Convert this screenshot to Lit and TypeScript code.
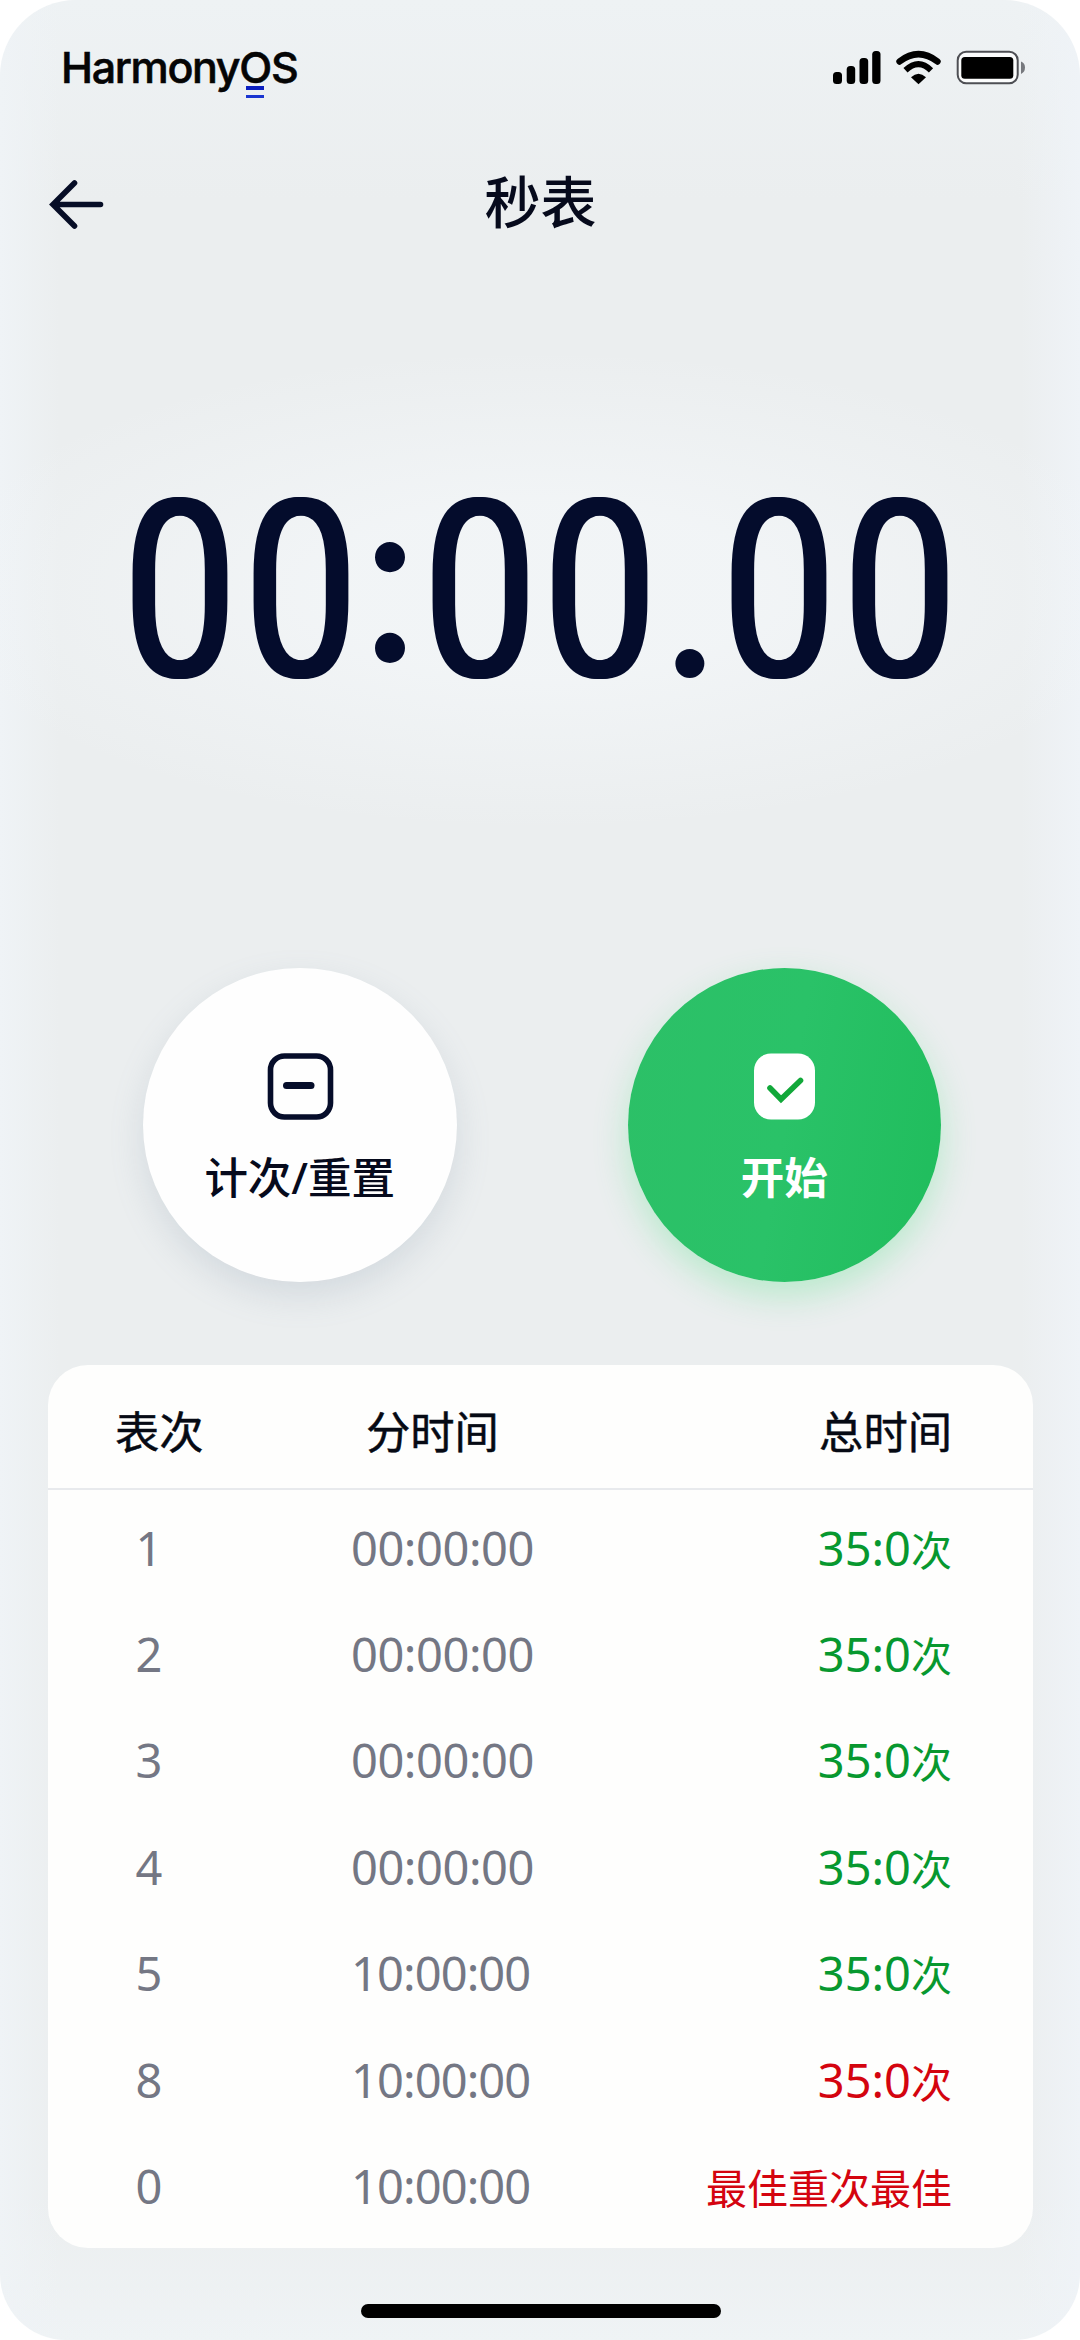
import { LitElement, html, css, svg } from "lit";
import { customElement, property } from "lit/decorators.js";
import { classMap } from "lit/directives/class-map.js";

interface Lap {
  no: string;
  split: string;
  total: string;
  tone: "good" | "bad";
}

const LAPS: Lap[] = [
  { no: "1", split: "00:00:00", total: "35:0次", tone: "good" },
  { no: "2", split: "00:00:00", total: "35:0次", tone: "good" },
  { no: "3", split: "00:00:00", total: "35:0次", tone: "good" },
  { no: "4", split: "00:00:00", total: "35:0次", tone: "good" },
  { no: "5", split: "10:00:00", total: "35:0次", tone: "good" },
  { no: "8", split: "10:00:00", total: "35:0次", tone: "bad" },
  { no: "0", split: "10:00:00", total: "最佳重次最佳", tone: "bad" },
];

@customElement("status-bar")
class StatusBar extends LitElement {
  static styles = css`
    :host {
      display: flex;
      justify-content: space-between;
      align-items: center;
      height: 134px;
      padding: 0 52px 0 61px;
    }
    .brand {
      font: 500 43px/60px Inter, "Noto Sans", sans-serif;
      letter-spacing: -1.35px;
      -webkit-text-stroke: 0.6px #050505;
      color: #050505;
    }
    .o {
      position: relative;
    }
    .marks {
      position: absolute;
      left: 7px;
      top: 45px;
      width: 18px;
      height: 12px;
      box-sizing: border-box;
      border-top: 4px solid #0b1fc0;
      border-bottom: 3.5px solid #1a35d0;
    }
    .icons {
      display: block;
    }
  `;
  render() {
    return html`
      <div class="brand">Harmony<span class="o">O<i class="marks"></i></span>S</div>
      <svg class="icons" width="196" height="40" viewBox="832 47 196 40">
        <g fill="#000">
          <rect x="833" y="72" width="9" height="12" rx="3.5" />
          <rect x="846.7" y="66" width="8.5" height="18" rx="3.5" />
          <rect x="859.5" y="58" width="8.7" height="26" rx="3.5" />
          <rect x="872.2" y="51" width="8.3" height="33" rx="3.5" />
        </g>
        <g fill="none" stroke="#000">
          <path d="M899.5 61.5Q918.5 46.8 937.5 61.5" stroke-width="6.4" stroke-linecap="round" />
          <path d="M905.5 70.3Q918.5 58 931 70.3" stroke-width="6" />
        </g>
        <path d="M911 77.3Q918.5 70 926 77.3L918.5 84.2z" fill="#000" />
        <rect x="957.7" y="51.7" width="60" height="31.6" rx="8.5" fill="#fbfcfc" stroke="#4e4f54" stroke-width="2" />
        <rect x="961.3" y="57" width="52" height="21.8" rx="3.5" fill="#000" />
        <path d="M1021 61.5Q1025 63 1025 67.5T1021 74z" fill="#77797e" />
      </svg>
    `;
  }
}

@customElement("title-bar")
class TitleBar extends LitElement {
  static styles = css`
    :host {
      display: grid;
      grid-template-columns: 1fr auto 1fr;
      align-items: center;
      height: 140px;
      padding: 0 48px 0 49px;
    }
    .back {
      display: block;
    }
    .title {
      font: 500 56px/70px "Noto Sans CJK SC", sans-serif;
      padding-bottom: 10px;
      color: #060a1c;
    }
  `;
  render() {
    return html`
      <svg class="back" width="56" height="50" viewBox="0 0 56 50" fill="none" stroke="#060d26" stroke-width="5.6" stroke-linecap="round">
        <path d="M25.5 4L4 25.5L25.5 47M5 25.5H51.5" />
      </svg>
      <div class="title">秒表</div>
    `;
  }
}

@customElement("time-display")
class TimeDisplay extends LitElement {
  @property() value = "00:00.00";
  static styles = css`
    :host {
      display: flex;
      justify-content: center;
      align-items: center;
      height: 260px;
      color: #040c2c;
    }
    .cell {
      display: flex;
      justify-content: center;
      height: 260px;
      line-height: 260px;
    }
    .digit {
      width: 120.9px;
      font-family: Roboto, sans-serif;
      font-size: 249px;
      font-weight: 400;
    }
    .digit .glyph {
      transform: translateY(1.5px) scaleX(0.81);
      text-shadow: 2.6px 0 0 #040c2c, -2.6px 0 0 #040c2c;
    }
    .mark {
      width: 58px;
      font-family: Lato, sans-serif;
      font-weight: 400;
    }
    .colon {
      font-size: 240px;
      transform: translateY(-22px);
    }
    .point {
      font-size: 232px;
      transform: translateY(-4px);
    }
  `;
  render() {
    return html`${[...this.value].map((c) => {
      const digit = c >= "0" && c <= "9";
      const classes = { cell: true, digit, mark: !digit, colon: c === ":", point: c === "." };
      return html`<span class=${classMap(classes)}><span class="glyph">${c}</span></span>`;
    })}`;
  }
}

@customElement("round-button")
class RoundButton extends LitElement {
  @property() label = "";
  @property({ reflect: true }) kind: "reset" | "start" = "reset";
  static styles = css`
    :host {
      display: flex;
      flex-direction: column;
      align-items: center;
      box-sizing: border-box;
      width: 313.5px;
      height: 314.5px;
      padding-top: 84px;
      border-radius: 50%;
      background: #fefefe;
      color: #060a1c;
      box-shadow: 0 14px 34px rgba(120, 140, 160, 0.2);
      font: 500 43.5px/60px "Noto Sans", "Noto Sans CJK SC", sans-serif;
    }
    :host([kind="start"]) {
      background: linear-gradient(100deg, #2cc067 0%, #2ac268 50%, #1fbd5c 100%);
      color: #fff;
      box-shadow: 0 14px 34px rgba(80, 225, 130, 0.32);
      font-weight: 700;
    }
    .icon {
      display: block;
    }
    .label {
      margin-top: 26px;
      white-space: nowrap;
    }
  `;
  render() {
    const icon =
      this.kind === "reset"
        ? svg`<rect x="4.5" y="4" width="60" height="61" rx="14" fill="none" stroke="#060d2a" stroke-width="5.6"/>
              <path d="M20.5 33.5H45" stroke="#060d2a" stroke-width="7" stroke-linecap="round"/>`
        : svg`<rect x="4" y="1.5" width="61" height="66" rx="17" fill="#fff"/>
              <path d="M20 36L31 47.2L50.5 28.5" fill="none" stroke="#12a83a" stroke-width="5.6" stroke-linecap="round"/>`;
    return html`
      <svg class="icon" width="68" height="69" viewBox="0 0 68 69">${icon}</svg>
      <div class="label">${this.label}</div>
    `;
  }
}

@customElement("lap-table")
class LapTable extends LitElement {
  @property({ attribute: false }) laps: Lap[] = [];
  static styles = css`
    :host {
      display: block;
      box-sizing: border-box;
      height: 883.5px;
      margin: 0 47px 0 48px;
      border-radius: 40px;
      background: #fefefd;
    }
    .row {
      display: grid;
      grid-template-columns: 202px 1fr 1fr;
      align-items: center;
      height: 106.4px;
      padding-right: 81px;
    }
    .head {
      height: 125px;
      padding-top: 8px;
      box-sizing: border-box;
      border-bottom: 2px solid #e8eaed;
      margin-bottom: 5px;
      font: 400 44.3px/60px "Noto Sans CJK SC", sans-serif;
      -webkit-text-stroke: 0.5px #060a14;
      color: #060a14;
    }
    .no,
    .split {
      font: 400 47px/60px "Noto Sans", sans-serif;
      color: #747784;
    }
    .no {
      text-align: center;
    }
    .split {
      padding-left: 101px;
      letter-spacing: -0.45px;
    }
    .tight {
      letter-spacing: -0.9px;
    }
    .total {
      text-align: right;
      font: 400 41px/60px "Noto Sans CJK SC", sans-serif;
      white-space: nowrap;
    }
    .num {
      font: 400 47px/60px "Noto Sans", sans-serif;
    }
    .good {
      color: #07982f;
    }
    .bad {
      color: #d4040f;
    }
    .h1 {
      padding-left: 67px;
    }
    .h2 {
      padding-left: 116px;
    }
    .h3 {
      text-align: right;
    }
  `;
  render() {
    return html`
      <div class="row head">
        <span class="h1">表次</span><span class="h2">分时间</span><span class="h3">总时间</span>
      </div>
      ${this.laps.map((l) => {
        const [, num, unit] = l.total.match(/^([\d:]*)(.*)$/)!;
        return html`<div class="row">
          <span class="no">${l.no}</span>
          <span class=${classMap({ split: true, tight: l.split.startsWith("1") })}>${l.split}</span>
          <span class="total ${l.tone}">${num ? html`<span class="num">${num}</span>` : ""}${unit}</span>
        </div>`;
      })}
    `;
  }
}

@customElement("app-root")
class AppRoot extends LitElement {
  static styles = css`
    :host {
      display: block;
      background: #fff;
    }
    .phone {
      display: flex;
      flex-direction: column;
      box-sizing: border-box;
      width: 1080px;
      height: 2340px;
      overflow: hidden;
      border-radius: 76px 76px 66px 66px;
      background: radial-gradient(620px 240px at 540px 590px, rgba(243, 246, 248, 0.8) 35%, rgba(243, 246, 248, 0) 100%),
        linear-gradient(90deg, #eff3f6 0, rgba(239, 243, 246, 0) 60px, rgba(239, 243, 246, 0) 1020px, #eff3f7 1080px),
        linear-gradient(180deg, #eef2f4 0, #ebeeef 200px, #ebeeef 2200px, #eff3f5 2340px);
    }
    .time {
      margin-top: 186px;
    }
    .actions {
      display: flex;
      justify-content: space-between;
      padding: 0 139px 0 143px;
      margin-top: 247.5px;
      margin-bottom: 82.5px;
    }
    .home {
      width: 360px;
      height: 14px;
      margin: 56px 359px 0 361px;
      border-radius: 7px;
      background: #000;
      flex: none;
    }
  `;
  render() {
    return html`
      <main class="phone">
        <status-bar></status-bar>
        <title-bar></title-bar>
        <time-display class="time"></time-display>
        <div class="actions">
          <round-button kind="reset" label="计次/重置"></round-button>
          <round-button kind="start" label="开始"></round-button>
        </div>
        <lap-table .laps=${LAPS}></lap-table>
        <div class="home"></div>
      </main>
    `;
  }
}
